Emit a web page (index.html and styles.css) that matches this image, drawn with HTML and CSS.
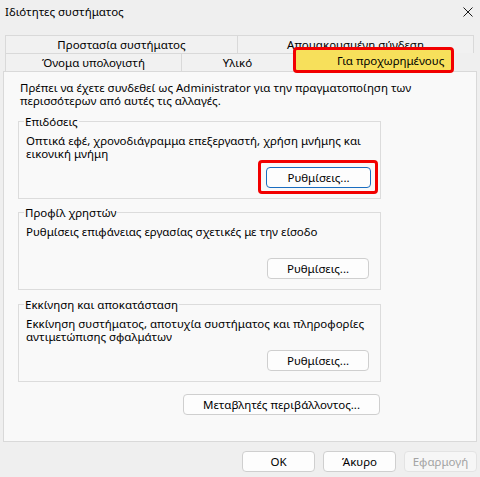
FILE: index.html
```html
<!DOCTYPE html>
<html lang="el">
<head>
<meta charset="utf-8">
<title>Ιδιότητες συστήματος</title>
<link rel="stylesheet" href="styles.css">
</head>
<body>
<div class="dialog">
  <header class="titlebar">
    <span class="title">Ιδιότητες συστήματος</span>
    <svg class="close" width="10" height="10" viewBox="0 0 10 10" aria-label="Κλείσιμο"><path d="M0.5 0.5L9.5 9.5M9.5 0.5L0.5 9.5" stroke="#1a1a1a" stroke-width="1" fill="none"/></svg>
  </header>

  <nav class="tabs">
    <div class="tab-row">
      <div class="tab tab-protect">Προστασία συστήματος</div>
      <div class="tab tab-remote tab-last">Απομακρυσμένη σύνδεση</div>
    </div>
    <div class="tab-row">
      <div class="tab tab-name">Όνομα υπολογιστή</div>
      <div class="tab tab-hardware">Υλικό</div>
      <div class="tab tab-active">Για προχωρημένους</div>
    </div>
  </nav>

  <main class="panel">
    <p class="intro">Πρέπει να έχετε συνδεθεί ως Administrator για την πραγματοποίηση των<br>περισσότερων από αυτές τις αλλαγές.</p>

    <section class="group">
      <div class="group-title">Επιδόσεις</div>
      <p class="group-text">Οπτικά εφέ, χρονοδιάγραμμα επεξεργαστή, χρήση μνήμης και<br>εικονική μνήμη</p>
      <span class="callout"><button class="btn btn-group btn-focus">Ρυθμίσεις...</button></span>
    </section>

    <section class="group">
      <div class="group-title">Προφίλ χρηστών</div>
      <p class="group-text">Ρυθμίσεις επιφάνειας εργασίας σχετικές με την είσοδο</p>
      <button class="btn btn-group">Ρυθμίσεις...</button>
    </section>

    <section class="group group-startup">
      <div class="group-title">Εκκίνηση και αποκατάσταση</div>
      <p class="group-text">Εκκίνηση συστήματος, αποτυχία συστήματος και πληροφορίες<br>αντιμετώπισης σφαλμάτων</p>
      <button class="btn btn-group">Ρυθμίσεις...</button>
    </section>

    <div class="env-row">
      <button class="btn btn-env">Μεταβλητές περιβάλλοντος...</button>
    </div>
  </main>

  <footer class="actions">
    <button class="btn btn-action">OK</button>
    <button class="btn btn-action">Άκυρο</button>
    <button class="btn btn-action" disabled>Εφαρμογή</button>
  </footer>
</div>
</body>
</html>
```

FILE: styles.css
```css
* { box-sizing: border-box; }

html, body { margin: 0; padding: 0; }

body {
  width: 480px;
  height: 477px;
  overflow: hidden;
  background: #efefef;
  color: #000;
  font-family: "Noto Sans", "Segoe UI", sans-serif;
  font-size: 11.5px;
  line-height: 13px;
}

p { margin: 0; white-space: nowrap; }

.titlebar {
  height: 35px;
  display: flex;
  justify-content: space-between;
  align-items: flex-start;
  padding: 5px 7px 0 5px;
}

.close { display: block; margin-top: 2px; }

.tab-row {
  display: flex;
  height: 18px;
  margin-left: 5px;
}

.tab {
  height: 18px;
  border-top: 1px solid #d9d9d9;
  border-left: 1px solid #d9d9d9;
  background: #f1f1f1;
  text-align: center;
  line-height: 17px;
  white-space: nowrap;
  overflow: hidden;
}

.tab-last { border-right: 1px solid #d9d9d9; }

.tab-protect { width: 232px; }
.tab-remote { width: 237px; }
.tab-name { width: 176px; }
.tab-hardware { width: 112px; }

.tab-active {
  position: relative;
  z-index: 1;
  width: 161px;
  height: 26px;
  margin-top: -6px;
  border: 3px solid #f20000;
  border-radius: 4px;
  background: #f7e05b;
  padding: 4px 0 0 41px;
  line-height: 13px;
  text-align: left;
  overflow: visible;
}

.panel {
  margin-left: 3px;
  width: 474px;
  height: 371px;
  border: 1px solid #d9d9d9;
  background: #f9f9f9;
  padding: 9px 0 0 14px;
}

.intro { margin-left: 2px; }

.group {
  width: 363px;
  height: 78px;
  margin-top: 13px;
  border: 1px solid #dcdcdc;
  padding: 0 11px 10px 7px;
  display: flex;
  flex-direction: column;
}

.intro + .group { margin-top: 14px; }
.group-startup { margin-top: 14px; }

.group-title {
  align-self: flex-start;
  margin: -7px 0 0 -2px;
  padding: 0 1px;
  background: #f9f9f9;
  line-height: 13px;
}

.group-text { margin-top: 6px; }

.btn {
  height: 21px;
  padding: 0;
  border: 1px solid #cfcfcf;
  border-radius: 4px;
  background: #fdfdfd;
  color: #000;
  font: inherit;
  line-height: 19px;
  text-align: center;
}

.btn-group {
  width: 102px;
  margin-top: auto;
  align-self: flex-end;
}

.callout {
  margin: auto -9px -6px -8px;
  align-self: flex-end;
  padding: 4px 4px 3px 5px;
  border: 3px solid #f20000;
  border-radius: 4px;
  display: flex;
}

.btn-focus {
  width: 105px;
  margin: 0;
  border-color: #1a6dc0;
}

.env-row {
  width: 362px;
  display: flex;
  justify-content: flex-end;
  margin-top: 12px;
}

.btn-env { width: 197px; }

.actions {
  display: flex;
  justify-content: flex-end;
  gap: 8px;
  padding-right: 3px;
  margin-top: 9px;
}

.btn-action { width: 73px; }

.btn:disabled {
  color: #a3a3a3;
  border-color: #e3e3e3;
  background: #f6f6f6;
}
```
